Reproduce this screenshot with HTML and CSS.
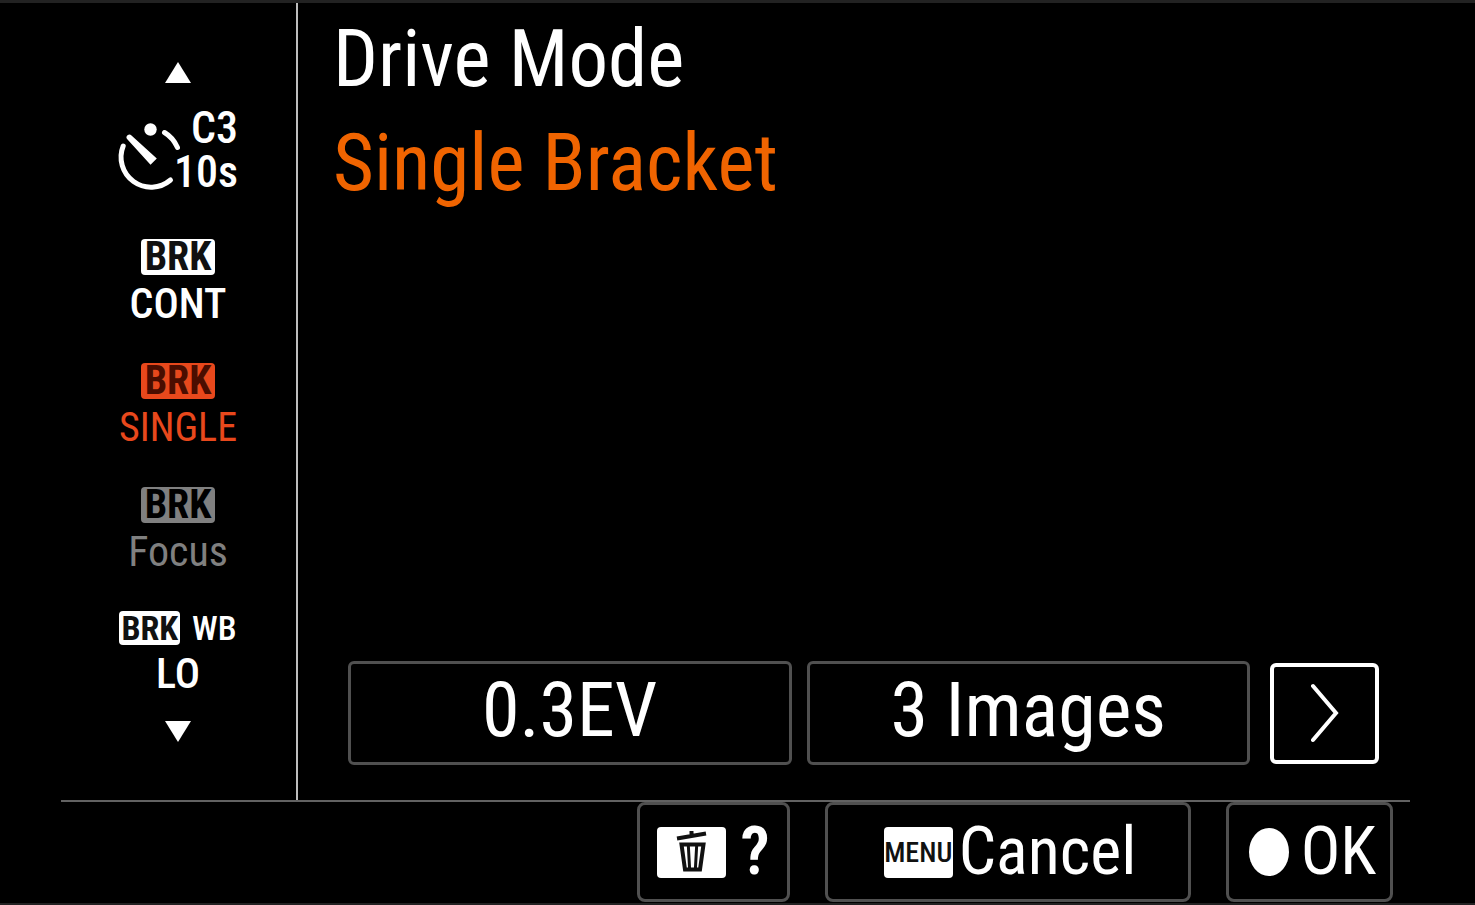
FILE: index.html
```html
<!DOCTYPE html>
<html lang="en">
<head>
<meta charset="utf-8">
<title>Drive Mode</title>
<link rel="stylesheet" href="styles.css">
</head>
<body>
<div class="screen">
  <div class="panel">
    <nav class="modes" aria-label="Drive modes">
      <button class="scroll scroll-up" aria-label="Previous modes"><svg width="26" height="21" viewBox="0 0 26 21"><path d="M13 0 26 21H0z"/></svg></button>
      <button class="mode mode-timer">
        <svg class="timer" width="66" height="84" viewBox="2 -4 66 84" aria-hidden="true">
          <circle cx="34.500" cy="17.500" r="6.200"/>
          <path d="M15.500 23.500 40.800 46.500 34.500 52.700 11.300 27.300A2.800 2.800 0 0 1 15.500 23.500z"/>
          <path class="dial" d="M7.200 34A30 30 0 0 0 54.500 68M48.500 20.500Q57 25.500 61.500 35.500"/>
        </svg>
        <span class="timer-text"><span>C3</span><span>10s</span></span>
      </button>
      <button class="mode"><span class="badge">BRK</span><span class="label">CONT</span></button>
      <button class="mode selected" aria-current="true"><span class="badge">BRK</span><span class="label">SINGLE</span></button>
      <button class="mode dimmed" disabled><span class="badge">BRK</span><span class="label">Focus</span></button>
      <button class="mode"><span class="row"><span class="badge small">BRK</span><span class="wb">WB</span></span><span class="label">LO</span></button>
      <button class="scroll scroll-down" aria-label="More modes"><svg width="26" height="21" viewBox="0 0 26 21"><path d="M0 0H26L13 21z"/></svg></button>
    </nav>
    <main class="detail">
      <h1 class="title">Drive Mode</h1>
      <p class="value">Single Bracket</p>
      <div class="options">
        <button class="option">0.3EV</button>
        <button class="option">3 Images</button>
        <button class="next" aria-label="Next"><svg width="28" height="60" viewBox="0 0 28 60"><path d="M2 3 25 30 2 57"/></svg></button>
      </div>
    </main>
  </div>
  <footer class="actions">
    <button class="action help" aria-label="Help">
      <span class="key"><svg width="32" height="44" viewBox="0 0 32 44"><path class="bin" d="M1 8.500 30 3.500M15.500 5V1"/><path class="bin" d="M5.500 14.500H27.500L24 39.500H9z"/><path class="bin rib" d="M12.300 15 13.600 39M20.700 15 19.400 39"/></svg></span>
      <span class="question">?</span>
    </button>
    <button class="action cancel"><span class="key menu">MENU</span><span>Cancel</span></button>
    <button class="action ok"><svg width="40" height="48" viewBox="0 0 40 48" aria-hidden="true"><ellipse cx="20" cy="24" rx="20" ry="24"/></svg><span>OK</span></button>
  </footer>
</div>
</body>
</html>
```
FILE: styles.css
```css
* { box-sizing: border-box; }

body {
  margin: 0;
  background: #000;
  color: #fff;
  font-family: "Roboto Condensed", "Liberation Sans Narrow", "Arial Narrow", Roboto, sans-serif;
}

button {
  margin: 0;
  padding: 0;
  border: 0;
  background: none;
  color: inherit;
  font: inherit;
}

svg { display: block; fill: currentColor; }

.screen {
  display: flex;
  flex-direction: column;
  min-height: 100vh;
  padding: 0 65px 0 61px;
  border-top: 3px solid #222;
  border-bottom: 2px solid #222;
}

.panel {
  display: grid;
  grid-template-columns: 237px 1fr;
  flex: 1;
  border-bottom: 2px solid #626262;
}

.modes {
  display: flex;
  flex-direction: column;
  padding-right: 1px;
  border-right: 2px solid #bdbdbd;
}

.scroll { display: flex; justify-content: center; }
.scroll-up { padding: 59px 0 10px; }
.scroll-down { padding: 8px 0; }

.mode {
  display: flex;
  flex-direction: column;
  align-items: center;
  gap: 6px;
  height: 124px;
  padding-top: 22px;
}

.mode-timer {
  display: grid;
  grid-template-columns: 120px;
  align-content: start;
  justify-content: center;
  padding-top: 13px;
}
.timer { grid-area: 1 / 1; overflow: visible; }
.dial { fill: none; stroke: currentColor; stroke-width: 5; stroke-linecap: round; }
.timer-text {
  grid-area: 1 / 1;
  display: flex;
  flex-direction: column;
  align-items: flex-end;
  font-size: 44px;
  font-weight: 500;
  line-height: 44px;
}

.badge {
  padding: 0 4px;
  border-radius: 4px;
  background: #fff;
  color: #111;
  font-size: 40px;
  font-weight: 700;
  line-height: 36px;
}
.badge.small { padding: 0 2px; font-size: 34px; line-height: 34px; }
.label { font-size: 42px; font-weight: 500; line-height: 46px; }
.row { display: flex; align-items: center; gap: 12px; }
.wb { font-size: 34px; font-weight: 500; line-height: 34px; }

.selected { color: #e8481c; }
.selected .badge { background: #e8481c; color: #4a0d00; }
.selected .label { font-size: 40px; font-weight: 400; }
.dimmed { color: #808080; }
.dimmed .badge { background: #808080; color: #000; }
.dimmed .label { font-weight: 400; }

.detail {
  display: flex;
  flex-direction: column;
  padding: 4px 31px 35px 35px;
}

.title, .value {
  margin: 0;
  font-size: 79px;
  font-weight: 400;
  line-height: 104px;
}
.value { color: #f06400; }

.options {
  display: grid;
  grid-template-columns: 1fr 1fr 114px;
  align-items: center;
  gap: 15px;
  margin-top: auto;
  margin-left: 15px;
  font-size: 76px;
}
.option {
  height: 104px;
  padding-bottom: 6px;
  border: 3px solid #505050;
  border-radius: 6px;
  line-height: 92px;
}
.next {
  display: grid;
  place-items: center;
  height: 101px;
  margin-left: 5px;
  border: 4px solid #fff;
  border-radius: 6px;
}
.next path { fill: none; stroke: currentColor; stroke-width: 4; stroke-linecap: round; }

.actions {
  display: flex;
  justify-content: flex-end;
  gap: 35px;
  padding: 0 17px 1px 0;
  font-size: 66px;
}
.action {
  display: flex;
  align-items: center;
  justify-content: center;
  height: 100px;
  border: 3px solid #505050;
  border-radius: 8px;
  line-height: 92px;
}
.help { width: 153px; gap: 14px; }
.cancel { width: 366px; gap: 6px; padding-left: 4px; }
.ok { width: 167px; gap: 12px; padding-left: 6px; }
.key {
  display: grid;
  place-items: center;
  width: 69px;
  height: 51px;
  border-radius: 4px;
  background: #fff;
  color: #111;
}
.menu { font-size: 28px; font-weight: 500; line-height: 51px; }
.question { font-weight: 600; }
.bin { fill: none; stroke: currentColor; stroke-width: 4; }
.rib { stroke-width: 3; }
```
